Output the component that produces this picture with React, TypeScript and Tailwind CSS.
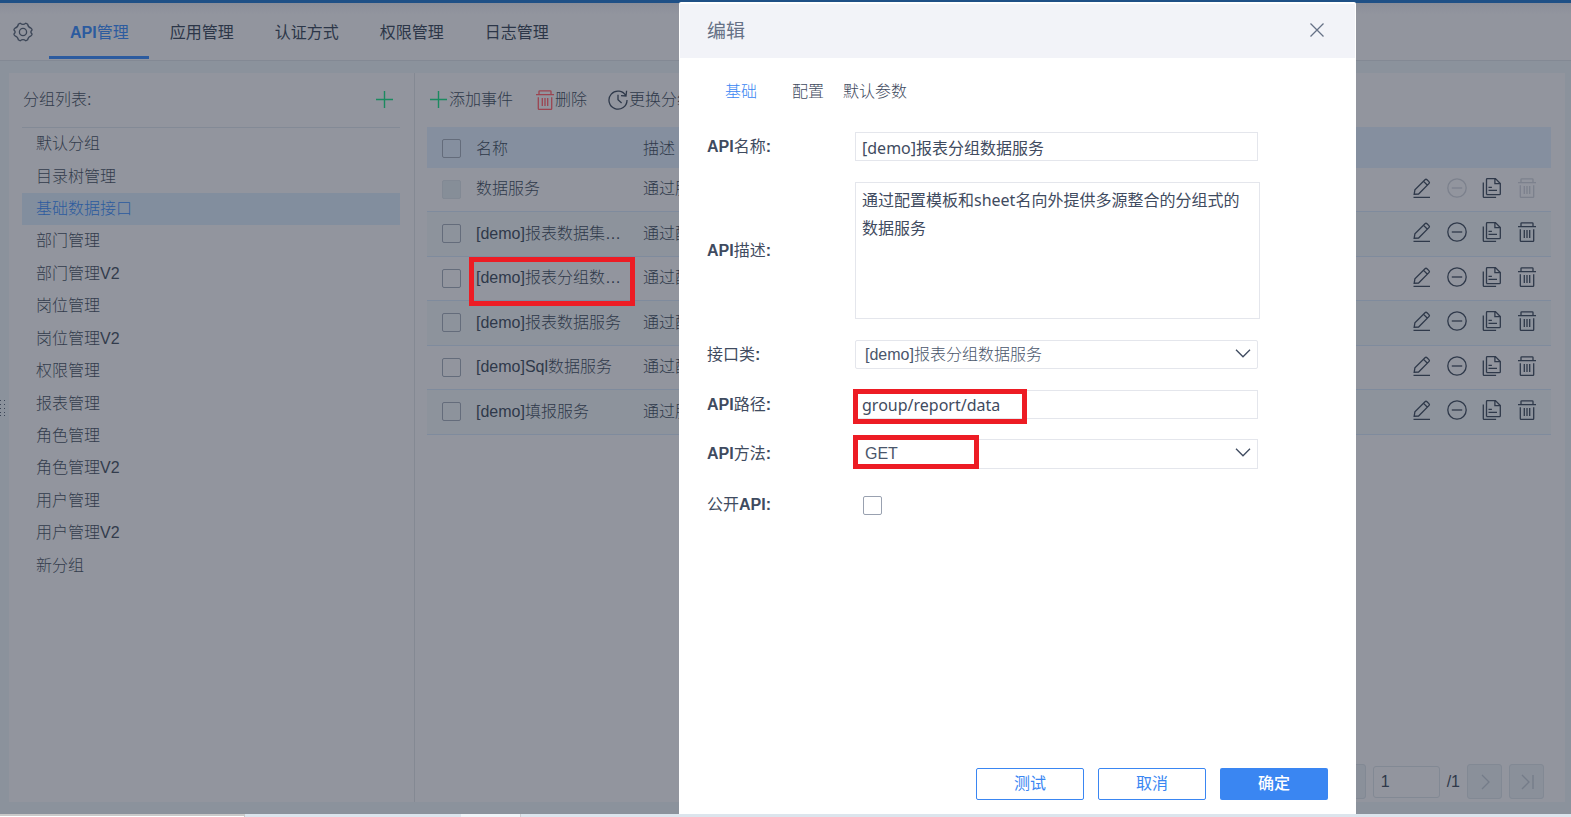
import type { ReactNode } from "react";

const navItems = ["应用管理", "认证方式", "权限管理", "日志管理"];

const groups = [
  "默认分组",
  "目录树管理",
  "基础数据接口",
  "部门管理",
  "部门管理V2",
  "岗位管理",
  "岗位管理V2",
  "权限管理",
  "报表管理",
  "角色管理",
  "角色管理V2",
  "用户管理",
  "用户管理V2",
  "新分组",
];

const rows = [
  { name: "数据服务", desc: "通过服务", locked: true },
  { name: "[demo]报表数据集…", desc: "通过配置" },
  { name: "[demo]报表分组数…", desc: "通过配置", marked: true },
  { name: "[demo]报表数据服务", desc: "通过配置" },
  { name: "[demo]Sql数据服务", desc: "通过配置" },
  { name: "[demo]填报服务", desc: "通过服务" },
];

function Icon({ children, className = "size-5" }: { children: ReactNode; className?: string }) {
  return (
    <svg
      viewBox="0 0 20 20"
      fill="none"
      stroke="currentColor"
      strokeWidth="1.3"
      className={`shrink-0 ${className}`}
      aria-hidden="true"
    >
      {children}
    </svg>
  );
}

function GearIcon() {
  return (
    <Icon>
      <circle cx="10" cy="10" r="3.6" />
      <path d="M7.2 1.2 Q10 3.4 12.8 1.2 L14.6 2.1 Q15.1 5.3 18 6.2 Q19.4 7.4 18.9 8.3 Q16.8 10 18.9 11.7 Q19.4 12.6 18 13.8 Q15.1 14.7 14.6 17.9 L12.8 18.8 Q10 16.6 7.2 18.8 L5.4 17.9 Q4.9 14.7 2 13.8 Q.6 12.6 1.1 11.7 Q3.2 10 1.1 8.3 Q.6 7.4 2 6.2 Q4.9 5.3 5.4 2.1Z" />
    </Icon>
  );
}

function PlusIcon() {
  return (
    <Icon className="size-5 text-[#1b8a60]">
      <path d="M11.5 1v17M3 9.5h17" strokeWidth="1.4" />
    </Icon>
  );
}

function EditIcon() {
  return (
    <Icon>
      <path d="M1.5 19.4h16.5" />
      <path d="M2.2 16.2l.7-4.3L13 1.7q1-1 2 0l1.9 1.9q1 1 0 2L6.6 16zM11.6 3.4l3.6 3.6" />
    </Icon>
  );
}

function MinusIcon() {
  return (
    <Icon>
      <circle cx="10" cy="10" r="9.2" />
      <path d="M4.8 10h10.4" />
    </Icon>
  );
}

function CopyIcon() {
  return (
    <Icon>
      <path d="M4.5 16.5V1.5q0-.9.9-.9h8l4.9 4.9v10.2q0 .9-.9.9H4.5M12.9.8v4.9h5.2" />
      <path d="M1.3 4.5v14.1q0 .8.8.8h12M6.5 9.4h3.4M6.5 12.4h8.5" />
    </Icon>
  );
}

function TrashIcon() {
  return (
    <Icon>
      <path d="M1 4.7h18M4 4.5V1.6q0-.8.8-.8h10.4q.8 0 .8.8v2.9M3.3 7.2v11.4q0 .8.8.8h11.8q.8 0 .8-.8V7.2M7.3 8v8M10 8v8M12.7 8v8" />
    </Icon>
  );
}

function ClockIcon() {
  return (
    <Icon>
      <path d="M18 6A9 9 0 1 0 19 10M18.6.8L18 6l-5-.4M10 4.8v5l3.6 3.2" />
    </Icon>
  );
}

function Checkbox({ label, id, disabled, className = "border-[#646c7b]" }: { label?: string; id?: string; disabled?: boolean; className?: string }) {
  return (
    <input
      type="checkbox"
      id={id}
      aria-label={label}
      disabled={disabled}
      className={`block size-[19px] appearance-none rounded-[2px] border ${className}`}
    />
  );
}

function TopNav() {
  return (
    <nav className="flex h-[58px] shrink-0 border-b border-[#838994] bg-[#92959e] bg-linear-to-b from-[#8b8e99] to-[#92959e] to-20%">
      <button aria-label="设置" className="ml-[13px] mr-4 flex items-center text-[#3c4657]">
        <GearIcon />
      </button>
      <div className="flex pb-px leading-[60px]">
        <a href="#api" className="border-b-[3px] border-[#2c5b9f] pl-[21px] pr-5 text-[#2c5b9f]">
          <b>API</b>管理
        </a>
        {navItems.map((item) => (
          <a key={item} href="#nav" className="pl-[21px] pr-5 text-[#2c3648]">
            {item}
          </a>
        ))}
      </div>
    </nav>
  );
}

function GroupList() {
  return (
    <aside className="w-[406px] shrink-0 border-r border-[#848993] pl-[13px] pr-[14px] font-light">
      <div className="flex h-[55px] items-center justify-between border-b border-[#838a96] pl-px pr-[7px]">
        <h2 className="text-[#333c4c]">分组列表:</h2>
        <button aria-label="添加分组">
          <PlusIcon />
        </button>
      </div>
      <ul className="grid h-[454px] auto-rows-fr">
        {groups.map((group) => (
          <li
            key={group}
            className={
              group === "基础数据接口"
                ? "flex items-center bg-[#828e9e] pl-3.5 text-[#2c5b9f]"
                : "flex items-center pl-3.5 text-[#333c4c]"
            }
          >
            <a href="#group">{group}</a>
          </li>
        ))}
      </ul>
    </aside>
  );
}

function ApiTable() {
  return (
    <table className="w-full table-fixed border-collapse text-left">
      <colgroup>
        <col className="w-[49px]" />
        <col className="w-[167px]" />
        <col />
        <col className="w-[160px]" />
      </colgroup>
      <thead>
        <tr className="h-[41px] bg-[#858f9f]">
          <th className="pl-[15px] pt-0.5">
            <Checkbox label="全选" />
          </th>
          <th className="pt-0.5 font-light">名称</th>
          <th className="pt-0.5 font-light">描述</th>
          <th aria-label="操作" />
        </tr>
      </thead>
      <tbody>
        {rows.map((row) => (
          <tr key={row.name} className="h-[44px] border-b border-[#7f8b9d] first:h-[43px] even:h-[45px] even:bg-[#8d939c]">
            <td className="pl-[15px]">
              <Checkbox
                label={row.name}
                disabled={row.locked}
                className={row.locked ? "border-[#828994] bg-[#868e98]" : "border-[#646c7b]"}
              />
            </td>
            <td className="relative whitespace-nowrap">
              {row.name}
              {row.marked && <div className="absolute -left-[7px] top-0 h-[49px] w-[166px] border-5 border-[#ed1c24]" />}
            </td>
            <td>{row.desc}</td>
            <td className="pb-[3px]">
              <div className="flex justify-end gap-[15px] pr-3.5 text-[#2f394a]">
                <button aria-label="编辑"><EditIcon /></button>
                <button aria-label="停用" disabled={row.locked} className="disabled:text-[#7c818d]"><MinusIcon /></button>
                <button aria-label="复制"><CopyIcon /></button>
                <button aria-label="删除" disabled={row.locked} className="disabled:text-[#7c818d]"><TrashIcon /></button>
              </div>
            </td>
          </tr>
        ))}
      </tbody>
    </table>
  );
}

function Pagination() {
  const button = "flex h-[35px] w-[35px] items-center justify-center rounded-[3px] border border-[#828994] bg-[#8a909a] text-[#747c89]";
  return (
    <div className="mt-auto flex items-center justify-end pb-[3px] pr-[7px]">
      <button aria-label="上一页" className={button}>
        <Icon><path d="M13 3l-6 7 6 7" /></Icon>
      </button>
      <input
        aria-label="页码"
        defaultValue="1"
        className="ml-[7px] h-8 w-[67px] rounded-[3px] border border-[#828994] px-[7px]"
      />
      <span className="mx-[7px]">/1</span>
      <button aria-label="下一页" className={button}>
        <Icon><path d="M7 3l7 7-7 7" /></Icon>
      </button>
      <button aria-label="末页" className={`ml-[7px] ${button}`}>
        <Icon><path d="M5 3l7 7-7 7M16 3v14" /></Icon>
      </button>
    </div>
  );
}

function ApiPanel() {
  return (
    <section className="flex min-w-0 flex-1 flex-col pl-3 pr-3.5 font-light text-[#2f394a]">
      <div className="flex h-[54px] shrink-0 items-center">
        <button className="mr-[22px] flex items-center gap-0.5"><PlusIcon />添加事件</button>
        <button className="mr-[21px] flex items-center">
          <span className="text-[#9c4450]"><TrashIcon /></span>
          删除
        </button>
        <button className="flex items-center gap-px"><ClockIcon />更换分组</button>
      </div>
      <ApiTable />
      <Pagination />
    </section>
  );
}

function Select({ id, value, className }: { id: string; value: string; className: string }) {
  return (
    <div className="relative w-[403px]">
      <select id={id} className={`w-full appearance-none border border-[#e4e6ec] px-[9px] font-light text-[#4a566b] ${className}`}>
        <option>{value}</option>
      </select>
      <svg viewBox="0 0 16 9" fill="none" stroke="#3f4b60" strokeWidth="1.3" className="pointer-events-none absolute right-[7px] top-[9px] h-[9px] w-4">
        <path d="M1 .8l7 7 7-7" />
      </svg>
    </div>
  );
}

function Field({ id, label, children, className }: { id: string; label: ReactNode; children: ReactNode; className: string }) {
  return (
    <div className={`relative flex items-center ${className}`}>
      <label htmlFor={id} className="w-[148px] shrink-0">
        {label}
      </label>
      {children}
    </div>
  );
}

function EditDialog() {
  const input = "border border-[#e4e6ec] px-1.5 font-['Noto_Sans','Noto_Sans_CJK_SC',sans-serif]";
  const outline = "h-8 w-[108px] rounded-[2px] border border-[#3a86f2] text-[#3a86f2]";
  return (
    <div className="absolute inset-x-0 bottom-[3px] top-0.5 flex justify-end pr-[215px]">
      <div role="dialog" aria-label="编辑" className="flex w-[677px] flex-col rounded-t-[2px] bg-white text-[#3f4b60]">
        <header className="mx-px mt-0.5 flex h-[54px] shrink-0 items-center justify-between bg-[#f2f3f8] pl-[27px] pr-[31px] text-[#667186]">
          <h1 className="pt-0.5 text-[19px]">编辑</h1>
          <button aria-label="关闭" className="pb-0.5">
            <svg viewBox="0 0 14 14" fill="none" stroke="currentColor" strokeWidth="1.3" className="size-3.5">
              <path d="M.5.5l13 13M13.5.5l-13 13" />
            </svg>
          </button>
        </header>
        <div className="flex h-[68px] shrink-0 items-center pl-[46px] font-light">
          <button className="mr-[35px] text-[#3a86f2]">基础</button>
          <button className="mr-[19px]">配置</button>
          <button>默认参数</button>
        </div>
        <div className="pl-7 pt-1.5">
          <Field id="name" label={<><b>API</b>名称<b>:</b></>} className="mb-[21px]">
            <input id="name" defaultValue="[demo]报表分组数据服务" className={`h-[29px] w-[403px] ${input}`} />
          </Field>
          <Field id="desc" label={<><b>API</b>描述<b>:</b></>} className="mb-[21px]">
            <textarea
              id="desc"
              defaultValue="通过配置模板和sheet名向外提供多源整合的分组式的数据服务"
              className={`block h-[137px] w-[405px] resize-none py-[3px] leading-7 ${input}`}
            />
          </Field>
          <Field id="class" label={<>接口类<b>:</b></>} className="mb-[21px]">
            <Select id="class" value="[demo]报表分组数据服务" className="h-[29px] rounded-[2px]" />
          </Field>
          <Field id="path" label={<><b>API</b>路径<b>:</b></>} className="mb-5">
            <input id="path" defaultValue="group/report/data" className={`h-[29px] w-[403px] ${input}`} />
            <div className="pointer-events-none absolute -top-px left-[146px] h-[35px] w-[174px] border-5 border-[#ed1c24]" />
          </Field>
          <Field id="method" label={<><b>API</b>方法<b>:</b></>} className="mb-6">
            <Select id="method" value="GET" className="h-[30px]" />
            <div className="pointer-events-none absolute -top-1 left-[146px] h-[34px] w-[126px] border-5 border-[#ed1c24]" />
          </Field>
          <Field id="open" label={<>公开<b>API:</b></>} className="h-6">
            <Checkbox id="open" className="ml-2 border-[#99a1b0]" />
          </Field>
        </div>
        <footer className="mt-auto flex justify-end gap-3.5 pb-3.5 pr-7">
          <button className={outline}>测试</button>
          <button className={outline}>取消</button>
          <button className="h-8 w-[108px] rounded-[2px] bg-[#3a86f2] font-medium text-white">确定</button>
        </footer>
      </div>
    </div>
  );
}

function DragHandle() {
  return (
    <svg viewBox="0 0 9 17" className="h-[17px] w-[9px] self-center text-[#3c4657]" fill="currentColor" aria-hidden="true">
      {[1, 5, 9, 13, 16].map((y) => (
        <g key={y}>
          <rect x="0" y={y - 1} width="1" height="1" />
          <rect x="4" y={y - 1} width="1" height="1" />
        </g>
      ))}
    </svg>
  );
}

export default function App() {
  return (
    <div className="relative flex h-screen flex-col overflow-hidden bg-[#8b929c] font-['Liberation_Sans','Noto_Sans_CJK_SC',sans-serif] text-base">
      <div className="h-[3px] shrink-0 bg-[#1f5086]" />
      <TopNav />
      <div className="flex min-h-0 flex-1 pb-3 pr-1.5 pt-3">
        <div className="flex w-[9px] shrink-0 pb-[58px]">
          <DragHandle />
        </div>
        <main className="flex min-w-0 flex-1 bg-[#92959e]">
          <GroupList />
          <ApiPanel />
        </main>
      </div>
      <div className="flex h-[3px] shrink-0 bg-[#dce5ed]">
        <div className="w-[245px] border-r border-t-2 border-[#c9c9c9] bg-white" />
        <div className="w-[216px]" />
        <div className="w-[60px] border-r border-[#c9cdd2] bg-[#f0f4f8]" />
      </div>
      <EditDialog />
    </div>
  );
}
